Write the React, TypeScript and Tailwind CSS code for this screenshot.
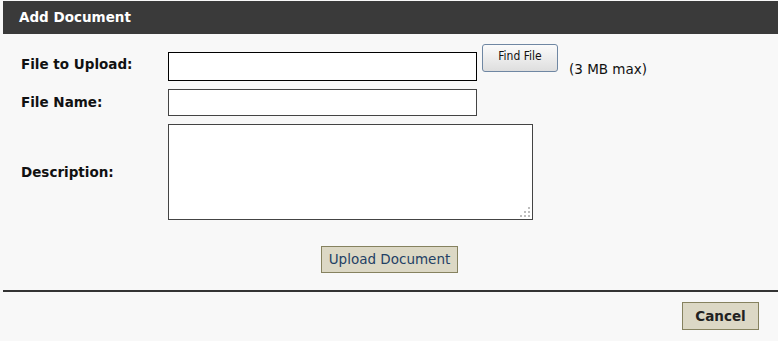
import React from 'react';

const font = { fontFamily: '"DejaVu Sans", Verdana, sans-serif' };

// grip dots in the textarea corner
const Grip = () => (
  <svg className="absolute right-[2px] bottom-[2px]" width="12" height="12" viewBox="0 0 12 12">
    <rect x="9" y="1" width="2" height="2" fill="#bdbdbd" />
    <rect x="5" y="5" width="2" height="2" fill="#bdbdbd" />
    <rect x="9" y="5" width="2" height="2" fill="#bdbdbd" />
    <rect x="1" y="9" width="2" height="2" fill="#bdbdbd" />
    <rect x="5" y="9" width="2" height="2" fill="#bdbdbd" />
    <rect x="9" y="9" width="2" height="2" fill="#bdbdbd" />
  </svg>
);

export default function App() {
  return (
    <div className="min-h-screen bg-[#f8f8f8] pt-px pl-[3px]" style={font}>
      {/* header */}
      <div className="h-[33px] bg-[#3a3a3a] pl-4 flex items-center text-white font-bold text-[13.5px]">
        Add Document
      </div>

      {/* form */}
      <div className="pt-[10px] pl-[18px]">
        <div className="grid grid-cols-[147px_1fr] gap-y-[8px]">
          <div className="h-[37px] flex items-end pb-[7px] text-[13.5px] font-bold text-[#111]">File to Upload:</div>
          <div className="flex items-start">
            <input className="mt-[8px] w-[309px] h-[29px] bg-white border border-black outline-none" />
            <button className="ml-[5px] w-[76px] h-[28px] rounded-[3px] border border-[#6f87a3] bg-gradient-to-b from-[#fbfbfb] to-[#dedede] text-[12px] text-[#111] pb-[4px]" style={{ fontFamily: '"DejaVu Sans Condensed", "DejaVu Sans", sans-serif' }}>
              Find File
            </button>
            <span className="ml-[11px] mt-[15px] text-[13.5px] text-[#111]">(3 MB max)</span>
          </div>

          <div className="h-[27px] flex items-center text-[13.5px] font-bold text-[#111]">File Name:</div>
          <div>
            <input className="w-[309px] h-[27px] bg-white border border-[#444] outline-none" />
          </div>

          <div className="h-[96px] flex items-center text-[13.5px] font-bold text-[#111]">Description:</div>
          <div className="relative w-[365px] h-[96px]">
            <textarea className="block w-[365px] h-[96px] bg-white border border-[#444] outline-none resize-none" />
            <Grip />
          </div>
        </div>

        <div className="flex justify-center mt-[26px] pr-[20px]">
          <button className="h-[27px] px-[7px] bg-[#dcd8c5] border border-[#86825f] text-[13.5px] text-[#234064]">
            Upload Document
          </button>
        </div>
      </div>

      <div className="mt-[17px] h-[2px] bg-[#333]" />

      <div className="flex justify-end pr-[19px] pt-[10px]">
        <button className="w-[77px] h-[28px] bg-[#dcd8c5] border border-[#86825f] text-[13.5px] font-bold text-[#222]">
          Cancel
        </button>
      </div>
    </div>
  );
}
